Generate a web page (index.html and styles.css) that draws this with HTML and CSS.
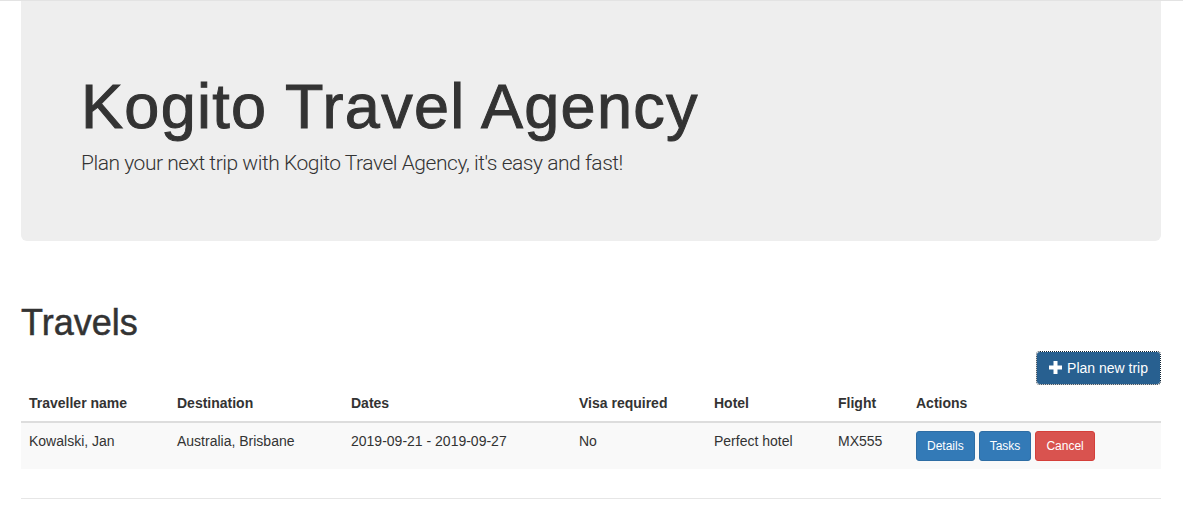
FILE: index.html
```html
<!DOCTYPE html>
<html lang="en">
<head>
<meta charset="utf-8">
<title>Kogito Travel Agency</title>
<link rel="stylesheet" href="styles.css">
</head>
<body>
<div class="topline"></div>
<div class="container">
  <div class="jumbotron">
    <h1 class="jumbo-title">Kogito Travel Agency</h1>
    <p class="jumbo-lead">Plan your next trip with Kogito Travel Agency, it's easy and fast!</p>
  </div>

  <h1 class="page-title">Travels</h1>

  <div class="toolbar">
    <button class="btn btn-primary btn-focused" type="button">
      <svg class="icon-plus" width="13" height="13" viewBox="0 0 13 13" aria-hidden="true">
        <path d="M4.5 0h4v4.5H13v4H8.5V13h-4V8.5H0v-4h4.5z" fill="#fff"/>
      </svg>
      <span>Plan new trip</span>
    </button>
  </div>

  <table class="table">
    <thead>
      <tr>
        <th class="col-name">Traveller name</th>
        <th class="col-dest">Destination</th>
        <th class="col-dates">Dates</th>
        <th class="col-visa">Visa required</th>
        <th class="col-hotel">Hotel</th>
        <th class="col-flight">Flight</th>
        <th class="col-actions">Actions</th>
      </tr>
    </thead>
    <tbody>
      <tr class="striped">
        <td>Kowalski, Jan</td>
        <td>Australia, Brisbane</td>
        <td>2019-09-21 - 2019-09-27</td>
        <td>No</td>
        <td>Perfect hotel</td>
        <td>MX555</td>
        <td class="actions">
          <button class="btn btn-sm btn-primary" type="button">Details</button>
          <button class="btn btn-sm btn-primary" type="button">Tasks</button>
          <button class="btn btn-sm btn-danger" type="button">Cancel</button>
        </td>
      </tr>
    </tbody>
  </table>

  <div class="footer-line"></div>
</div>
</body>
</html>
```

FILE: styles.css
```css
* {
  box-sizing: border-box;
}

html, body {
  margin: 0;
  padding: 0;
  background: #fff;
}

body {
  font-family: "Liberation Sans", Helvetica, Arial, sans-serif;
  font-size: 14px;
  line-height: 1.42857143;
  color: #333;
}

.topline {
  height: 1px;
  background: #e3e3e3;
}

.container {
  width: 1170px;
  margin-left: calc(50% - 585.5px);
  padding: 0 15px;
}

.jumbotron {
  background: #eee;
  border-radius: 0 0 6px 6px;
  padding: 48px 60px;
}

.jumbo-title {
  margin: 23px 0 7px;
  font-size: 63px;
  font-weight: 500;
  line-height: 1.1;
  letter-spacing: 1.3px;
  -webkit-text-stroke: 1px #333;
}

.jumbo-lead {
  margin: 0 0 15px;
  font-family: Roboto, "Liberation Sans", sans-serif;
  font-size: 21px;
  font-weight: 300;
  line-height: 30px;
  letter-spacing: -0.47px;
}

.page-title {
  margin: 62px 0 8px;
  font-size: 36px;
  font-weight: 500;
  line-height: 1.1;
  -webkit-text-stroke: 0.5px #333;
}

.toolbar {
  display: flex;
  justify-content: flex-end;
}

.btn {
  display: inline-flex;
  align-items: center;
  justify-content: center;
  font-family: inherit;
  font-size: 14px;
  line-height: 20px;
  padding: 6px 12px;
  border: 1px solid transparent;
  border-radius: 4px;
  color: #fff;
  cursor: pointer;
  white-space: nowrap;
}

.btn-primary {
  background: #337ab7;
  border-color: #2e6da4;
}

.btn-danger {
  background: #d9534f;
  border-color: #d43f3a;
}

.btn-focused {
  background: #286090;
  background-clip: padding-box;
  border: 1px dotted #0e2233;
  gap: 5px;
}

.icon-plus {
  display: block;
}

.btn-sm {
  padding: 5px 10px;
  font-size: 12px;
  line-height: 18px;
  border-radius: 3px;
}

.table {
  width: 100%;
  border-collapse: collapse;
  border-spacing: 0;
}

.table th,
.table td {
  padding: 8px;
  text-align: left;
  vertical-align: top;
  line-height: 20px;
}

.table th {
  font-weight: bold;
  border-bottom: 2px solid #ddd;
  vertical-align: bottom;
}

.table .striped {
  background: #f9f9f9;
}

.col-name { width: 148px; }
.col-dest { width: 174px; }
.col-dates { width: 228px; }
.col-visa { width: 135px; }
.col-hotel { width: 124px; }
.col-flight { width: 78px; }

.actions {
  display: flex;
  gap: 4px;
}

.footer-line {
  margin-top: 29px;
  border-top: 1px solid #e6e6e6;
}
```
